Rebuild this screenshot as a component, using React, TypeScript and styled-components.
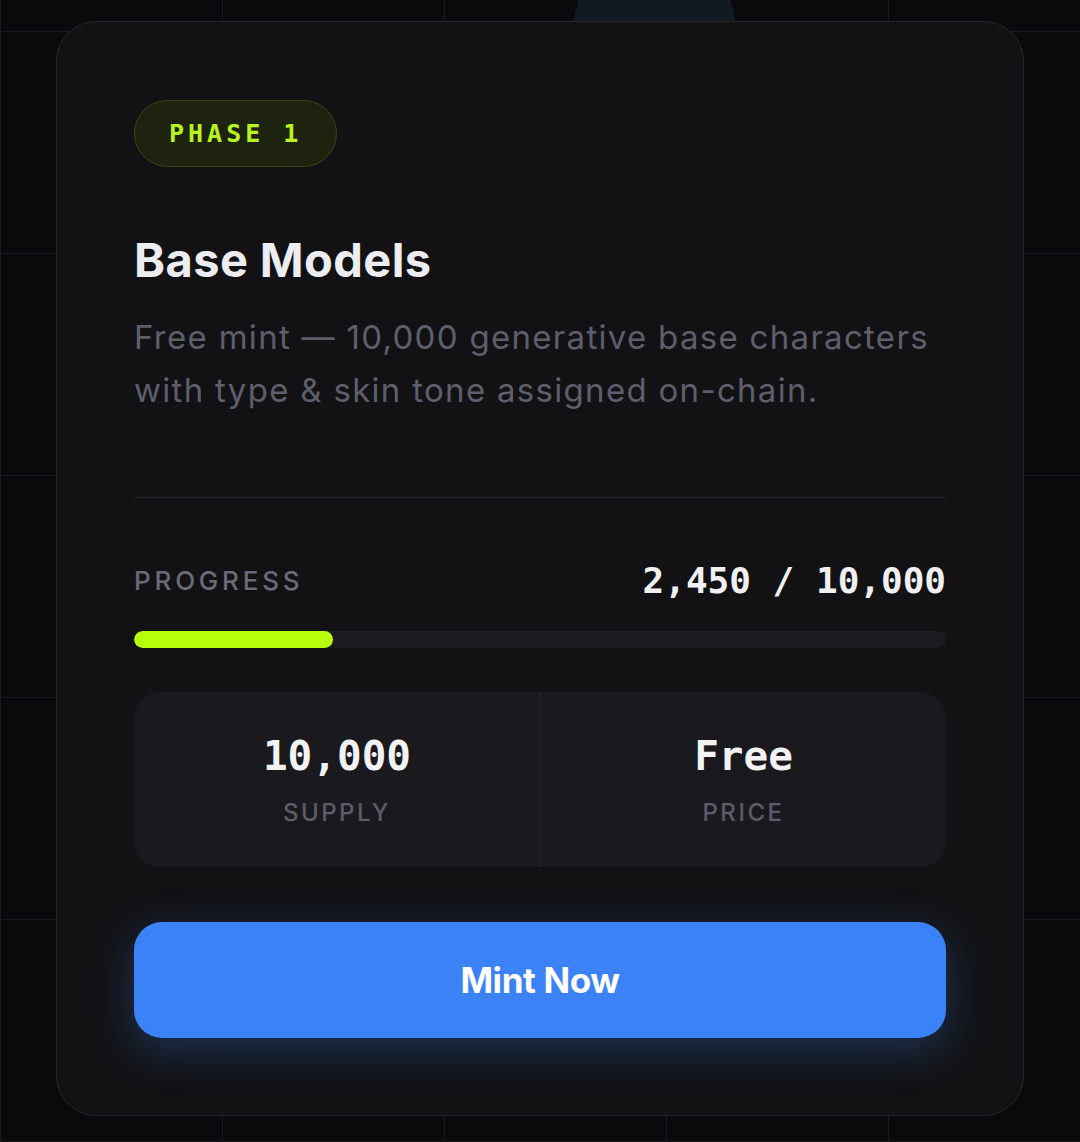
import styled, { createGlobalStyle } from 'styled-components';

const GlobalStyle = createGlobalStyle`
  html, body {
    margin: 0;
    padding: 0;
    background: #0a0a0c;
  }
  * {
    box-sizing: border-box;
  }
`

const Page = styled.div`
  position: relative;
  min-height: 1142px;
  width: 1080px;
  overflow: hidden;
  padding: 21px 56px 27px;
  background-color: #0a0a0c;
  background-image:
    linear-gradient(to right, #1b1b1f 1px, transparent 1px),
    linear-gradient(to bottom, #1b1b1f 1px, transparent 1px);
  background-size: 222px 222px;
  background-position: 0 31px;
  font-family: Inter, "Noto Sans", sans-serif;
`

const Glow = styled.div`
  position: absolute;
  top: -60px;
  left: 572px;
  width: 165px;
  height: 200px;
  border-radius: 50%;
  background: #111a22;
`

const Card = styled.div`
  position: relative;
  display: flex;
  flex-direction: column;
  padding: 78px 77px 77px;
  background: #121214;
  border: 1px solid #26262b;
  border-radius: 40px;
`

const Badge = styled.div`
  align-self: flex-start;
  display: flex;
  align-items: center;
  height: 67px;
  padding: 0 34px;
  border-radius: 999px;
  background: #1d230f;
  border: 1.5px solid #3a4716;
  color: #b9f21d;
  font-family: "DejaVu Sans Mono", "Liberation Mono", monospace;
  font-size: 25px;
  font-weight: 700;
  letter-spacing: 4px;
`

const Title = styled.h1`
  margin: 66px 0 0;
  font-size: 47px;
  line-height: 54px;
  font-weight: 700;
  color: #ececf1;
  letter-spacing: 0.4px;
`

const Description = styled.p`
  margin: 24px 0 0;
  font-size: 33px;
  line-height: 53px;
  font-weight: 400;
  letter-spacing: 1.3px;
  color: #5e5e6c;
`

const Divider = styled.hr`
  margin: 80px 0 0;
  border: none;
  height: 1px;
  background: #27272c;
`

const ProgressHeader = styled.div`
  display: flex;
  justify-content: space-between;
  align-items: center;
  margin-top: 62px;
`

const Label = styled.span`
  font-size: 26px;
  font-weight: 500;
  letter-spacing: 3.8px;
  color: #6a6a78;
  text-transform: uppercase;
`

const Count = styled.span`
  font-family: "DejaVu Sans Mono", "Liberation Mono", monospace;
  font-size: 36px;
  font-weight: 700;
  color: #f0f0f3;
`

const Track = styled.div`
  margin-top: 30px;
  height: 17px;
  border-radius: 999px;
  background: #1c1c20;
  overflow: hidden;
`

const Fill = styled.div`
  height: 100%;
  border-radius: 999px;
  background: #b8ff0e;
`

const Stats = styled.div`
  display: grid;
  grid-template-columns: 1fr 1fr;
  margin-top: 44px;
  height: 175px;
  border-radius: 26px;
  background: #1a1a1e;
  overflow: hidden;
`

const Stat = styled.div<{ $divider?: boolean }>`
  display: flex;
  flex-direction: column;
  align-items: center;
  justify-content: center;
  gap: 19px;
  padding-top: 1px;
  border-left: ${p => (p.$divider ? '1px solid #26262b' : 'none')};
`

const StatValue = styled.span`
  font-family: "DejaVu Sans Mono", "Liberation Mono", monospace;
  font-size: 41px;
  line-height: 46px;
  font-weight: 700;
  color: #f2f2f5;
`

const StatLabel = styled.span`
  font-size: 24px;
  line-height: 30px;
  font-weight: 500;
  letter-spacing: 2.5px;
  color: #5c5c6a;
`

const MintButton = styled.button`
  margin-top: 55px;
  height: 116px;
  border: none;
  border-radius: 28px;
  background: #3b82f6;
  color: #ffffff;
  font-family: Inter, "Noto Sans", sans-serif;
  font-size: 35px;
  font-weight: 700;
  letter-spacing: -0.4px;
  box-shadow: 0 12px 44px rgba(59, 130, 246, 0.3);
  cursor: pointer;
`

export default function App() {
  const minted = 2450;
  const supply = 10000;
  const pct = (minted / supply) * 100;

  return (
    <Page>
      <GlobalStyle />
      <Glow />
      <Card>
        <Badge>PHASE 1</Badge>
        <Title>Base Models</Title>
        <Description>
          Free mint — 10,000 generative base characters with type &amp; skin tone assigned on-chain.
        </Description>
        <Divider />
        <ProgressHeader>
          <Label>Progress</Label>
          <Count>{minted.toLocaleString('en-US')} / {supply.toLocaleString('en-US')}</Count>
        </ProgressHeader>
        <Track>
          <Fill style={{ width: `${pct}%` }} />
        </Track>
        <Stats>
          <Stat>
            <StatValue>10,000</StatValue>
            <StatLabel>SUPPLY</StatLabel>
          </Stat>
          <Stat $divider>
            <StatValue>Free</StatValue>
            <StatLabel>PRICE</StatLabel>
          </Stat>
        </Stats>
        <MintButton>Mint Now</MintButton>
      </Card>
    </Page>
  );
}
